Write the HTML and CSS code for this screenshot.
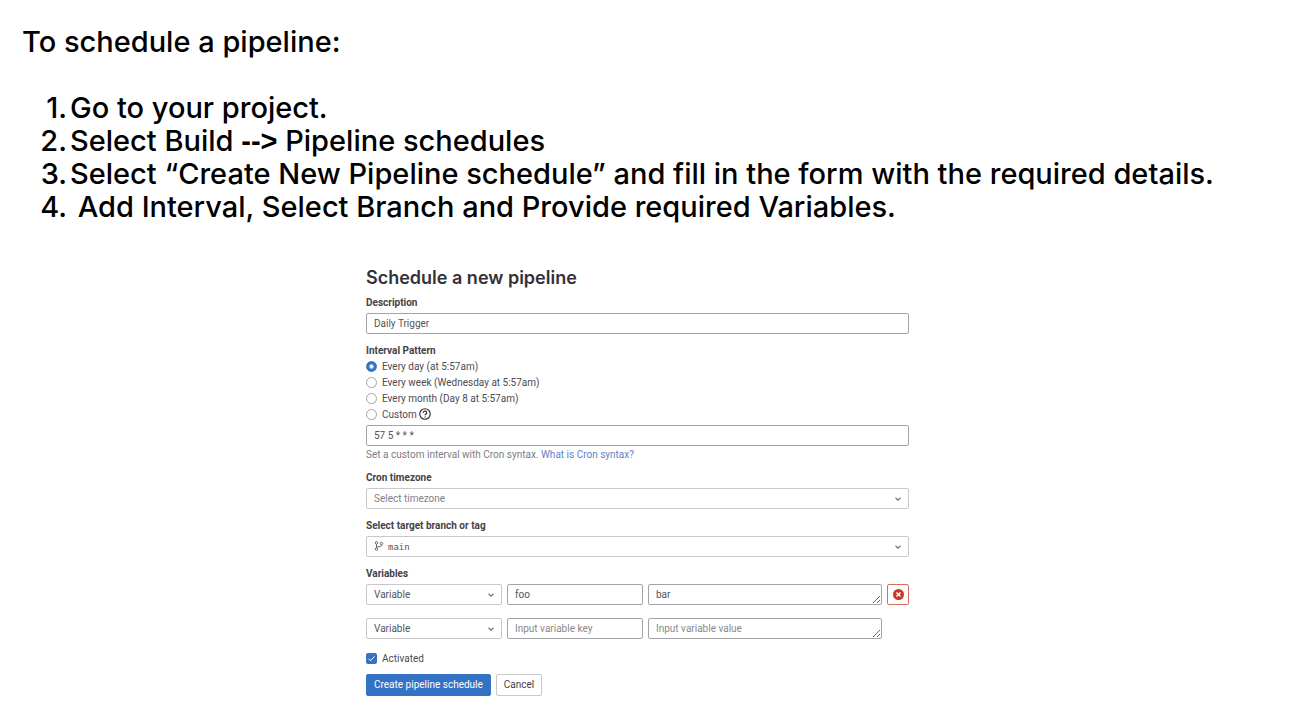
FILE: index.html
```html
<!DOCTYPE html>
<html lang="en">
<head>
<meta charset="utf-8">
<title>Schedule a new pipeline</title>
<link rel="stylesheet" href="styles.css">
</head>
<body>
<main class="page">
  <section class="guide">
    <h1 class="guide-title">To schedule a pipeline:</h1>
    <ol class="steps">
      <li class="step"><span class="step-number">1.</span><span>Go to your project.</span></li>
      <li class="step"><span class="step-number">2.</span><span>Select Build <span class="arrow">--&gt;</span> Pipeline schedules</span></li>
      <li class="step"><span class="step-number">3.</span><span>Select “Create New Pipeline schedule” and fill in the form with the required details.</span></li>
      <li class="step"><span class="step-number">4.</span><span>&nbsp;Add Interval, Select Branch and Provide required Variables.</span></li>
    </ol>
  </section>

  <div class="form-area">
    <form class="schedule">
      <h2 class="form-title">Schedule a new pipeline</h2>

      <div class="group">
        <label class="label" for="description">Description</label>
        <input class="control" id="description" type="text" value="Daily Trigger">
      </div>

      <fieldset class="group interval">
        <legend class="label">Interval Pattern</legend>
        <label class="choice"><input class="radio" type="radio" name="interval" checked>Every day (at 5:57am)</label>
        <label class="choice"><input class="radio" type="radio" name="interval">Every week (Wednesday at 5:57am)</label>
        <label class="choice"><input class="radio" type="radio" name="interval">Every month (Day 8 at 5:57am)</label>
        <label class="choice"><input class="radio" type="radio" name="interval">Custom
          <svg class="help-icon" viewBox="0 0 16 16" aria-hidden="true"><circle cx="8" cy="8" r="7"/><path d="M5.8 6.3a2.2 2.2 0 1 1 3.3 1.9C8.3 8.600 8 8.900 8 9.700M8 11.200v1.300"/></svg>
        </label>
        <input class="control cron" type="text" value="57 5 * * *" aria-label="Cron interval">
        <p class="hint">Set a custom interval with Cron syntax. <a class="link" href="#cron">What is Cron syntax?</a></p>
      </fieldset>

      <div class="group">
        <label class="label" for="timezone">Cron timezone</label>
        <div class="select-box">
          <select class="control select muted" id="timezone"><option>Select timezone</option></select>
          <svg class="chevron" viewBox="0 0 8 8" aria-hidden="true"><path d="M1.500 2.800 4 5.200l2.500-2.400"/></svg>
        </div>
      </div>

      <div class="group">
        <label class="label" for="branch">Select target branch or tag</label>
        <div class="select-box">
          <svg class="branch-icon" viewBox="0 0 16 16" aria-hidden="true"><circle cx="4" cy="3" r="2"/><circle cx="12" cy="4" r="2"/><circle cx="4" cy="13" r="2"/><path d="M4 5v6M12 6c0 2.500-1.500 3-4 3-2.200 0-4 .4-4 2"/></svg>
          <select class="control select branch" id="branch"><option>main</option></select>
          <svg class="chevron" viewBox="0 0 8 8" aria-hidden="true"><path d="M1.500 2.800 4 5.200l2.500-2.400"/></svg>
        </div>
      </div>

      <fieldset class="group variables">
        <legend class="label">Variables</legend>
        <div class="variable-row">
          <div class="select-box">
            <select class="control select" aria-label="Variable type"><option>Variable</option></select>
            <svg class="chevron" viewBox="0 0 8 8" aria-hidden="true"><path d="M1.500 2.800 4 5.200l2.500-2.400"/></svg>
          </div>
          <input class="control" type="text" value="foo" aria-label="Variable key">
          <textarea class="control area" rows="1" aria-label="Variable value">bar</textarea>
          <button class="remove" type="button" aria-label="Remove variable">
            <svg class="remove-icon" viewBox="0 0 16 16" aria-hidden="true"><circle cx="8" cy="8" r="8"/><path d="m5 5 6 6m0-6-6 6"/></svg>
          </button>
        </div>
        <div class="variable-row">
          <div class="select-box">
            <select class="control select" aria-label="Variable type"><option>Variable</option></select>
            <svg class="chevron" viewBox="0 0 8 8" aria-hidden="true"><path d="M1.500 2.800 4 5.200l2.500-2.400"/></svg>
          </div>
          <input class="control" type="text" placeholder="Input variable key" aria-label="Variable key">
          <textarea class="control area" rows="1" placeholder="Input variable value" aria-label="Variable value"></textarea>
        </div>
      </fieldset>

      <label class="choice activated">
        <span class="check-box">
          <input class="check" type="checkbox" checked>
          <svg class="tick" viewBox="0 0 11 11" aria-hidden="true"><path d="m2.500 5.700 2 2 4-4.400"/></svg>
        </span>Activated
      </label>

      <div class="actions">
        <button class="button primary" type="submit">Create pipeline schedule</button>
        <button class="button" type="button">Cancel</button>
      </div>
    </form>
  </div>
</main>
</body>
</html>
```
FILE: styles.css
```css
* { box-sizing: border-box; }

body {
  margin: 0;
  background: #fff;
  color: #4c4b51;
  font: 10px/16px Roboto, "Liberation Sans", sans-serif;
}

h1, h2, p, ol, fieldset, legend {
  margin: 0;
  padding: 0;
  border: 0;
}

.guide {
  padding: 25px 22px 0;
  color: #000;
  font-family: Inter, "Liberation Sans", sans-serif;
  font-size: 29px;
  font-weight: 500;
  line-height: 33px;
}

.guide-title {
  font: inherit;
  margin-bottom: 33px;
}

.steps { list-style: none; }

.step {
  display: grid;
  grid-template-columns: 45px 1fr;
  column-gap: 3px;
}

.step-number { text-align: right; }

.arrow {
  font-family: "Liberation Sans", sans-serif;
  font-weight: 700;
  line-height: 1;
}

.form-area {
  display: grid;
  grid-template-columns: 366fr 543fr 391fr;
  padding: 43px 0 24px;
}

.schedule { grid-column: 2; }

.form-title {
  margin-bottom: 5px;
  color: #333238;
  font-family: Inter, "Liberation Sans", sans-serif;
  font-size: 18px;
  font-weight: 600;
  line-height: 24px;
}

.group { margin-bottom: 9px; }

.label {
  display: block;
  margin-bottom: 2px;
  color: #434248;
  font-weight: 700;
}

.interval { margin-bottom: 7px; }
.interval .label { margin-bottom: 0; }

.control {
  display: block;
  width: 100%;
  height: 21px;
  margin: 0;
  padding: 0 7px;
  border: 1px solid #a4a3a8;
  border-radius: 2px;
  background: #fff;
  color: #55545a;
  font: inherit;
}

.control::placeholder { color: #89888d; opacity: 1; }

.cron { margin: 2px 0 1px; }

.choice {
  display: flex;
  align-items: flex-start;
}

.radio {
  appearance: none;
  width: 11px;
  height: 11px;
  margin: 2px 5px 0 0;
  border: 1px solid #a4a3a8;
  border-radius: 50%;
  background: #fff;
}

.radio:checked {
  border-color: #3472c5;
  background: radial-gradient(circle, #fff 1px, #3472c5 3px);
}

.help-icon {
  width: 12px;
  height: 12px;
  margin: 1px 0 0 2px;
  fill: none;
  stroke: #333238;
  stroke-width: 1.600;
}

.hint { color: #7d7c82; }

.link { color: #617fc5; text-decoration: none; }

.select-box { position: relative; }

.select {
  appearance: none;
  border-color: #c8c7cc;
}

.muted { color: #828187; }

.branch {
  padding-left: 21px;
  font: 9px "DejaVu Sans Mono", monospace;
}

.chevron {
  position: absolute;
  top: 7px;
  right: 7px;
  width: 8px;
  height: 8px;
  fill: none;
  stroke: #737278;
  stroke-width: 1.200;
  pointer-events: none;
}

.branch-icon {
  position: absolute;
  top: 5px;
  left: 8px;
  width: 10px;
  height: 10px;
  fill: none;
  stroke: #626168;
  stroke-width: 1.500;
}

.variables { margin-bottom: 12px; }

.variable-row {
  display: grid;
  grid-template-columns: 136fr 136fr 234fr 22px;
  column-gap: 5px;
}

.variable-row + .variable-row { margin-top: 13px; }

.area {
  padding: 2px 7px;
  overflow: hidden;
  resize: vertical;
}

.remove {
  display: flex;
  align-items: center;
  justify-content: center;
  height: 21px;
  padding: 0;
  border: 1px solid #dc6b5b;
  border-radius: 2px;
  background: #fff;
}

.remove-icon { width: 11px; height: 11px; fill: #c73820; }
.remove-icon path { stroke: #fff; stroke-width: 2; }

.activated { margin-bottom: 7px; }

.check-box {
  position: relative;
  display: flex;
  margin: 2px 5px 0 0;
}

.check {
  appearance: none;
  width: 11px;
  height: 11px;
  margin: 0;
  border-radius: 2px;
  background: #3472c5;
}

.tick {
  position: absolute;
  inset: 0;
  fill: none;
  stroke: #fff;
  pointer-events: none;
}

.actions { display: flex; gap: 5px; }

.button {
  height: 22px;
  padding: 0 7px;
  border: 1px solid #c8c7cc;
  border-radius: 2px;
  background: #fff;
  color: #434248;
  font: inherit;
}

.primary {
  border-color: #3472c5;
  background: #3472c5;
  color: #fff;
}
```
